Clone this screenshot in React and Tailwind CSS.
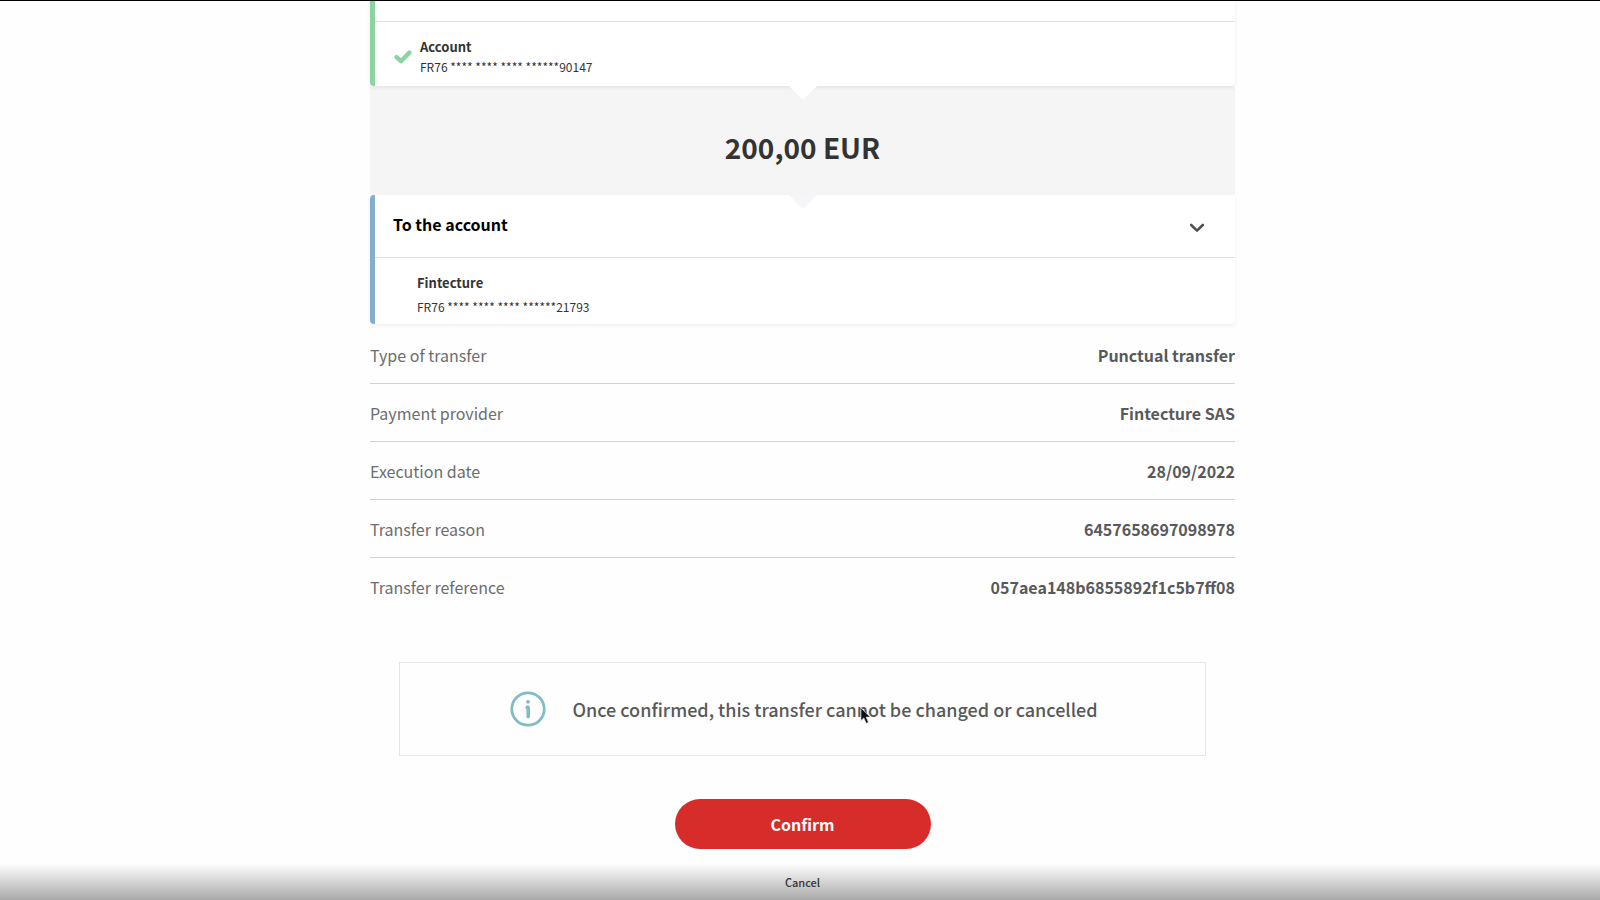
const details = [
  { label: "Type of transfer", value: "Punctual transfer" },
  { label: "Payment provider", value: "Fintecture SAS" },
  { label: "Execution date", value: "28/09/2022" },
  { label: "Transfer reason", value: "6457658697098978" },
  { label: "Transfer reference", value: "057aea148b6855892f1c5b7ff08" }
];

function Notch({ className }) {
  return (
    <svg viewBox="0 0 28 14" className={`absolute left-1/2 z-20 h-[14px] w-7 -translate-x-1/2 ${className}`} aria-hidden="true">
      <path d="M0 0H28L15.5 12.5Q14 14 12.5 12.5Z" fill="currentColor" />
    </svg>
  );
}

function CheckIcon() {
  return (
    <svg viewBox="0 0 18 16" className="h-4 w-[18px] text-[#8dd3a2]" fill="none" aria-hidden="true">
      <path d="M2.6 8.2L7 12.2L15.4 3.6" stroke="currentColor" strokeWidth="4.4" strokeLinecap="round" strokeLinejoin="round" />
    </svg>
  );
}

function InfoIcon() {
  return (
    <svg viewBox="0 0 36 36" className="h-9 w-9 shrink-0 text-[#80bcc3]" fill="none" aria-hidden="true">
      <circle cx="18" cy="18" r="16.2" stroke="currentColor" strokeWidth="2.8" />
      <circle cx="18" cy="10.8" r="1.9" fill="currentColor" />
      <path d="M17.2 16.4H18.2V25.6" stroke="currentColor" strokeWidth="3.6" strokeLinecap="round" strokeLinejoin="round" />
    </svg>
  );
}

function Pointer() {
  return (
    <svg viewBox="0 0 12 18" className="absolute top-3 left-72 h-[18px] w-3" aria-hidden="true">
      <path d="M1 1V13.5L3.9 10.9L6.2 16.3L8.4 15.3L6.1 10.1H10.2Z" fill="#111" stroke="#ddd" strokeWidth="0.6" />
    </svg>
  );
}

export default function App() {
  return (
    <main className="relative min-h-screen border-t border-black bg-[#fefefe] pl-[5px] font-['Noto_Sans_CJK_SC',sans-serif] text-[#58595a]">
      <div className="mx-auto flex w-full max-w-[865px] flex-col">
        <section className="relative z-10 rounded-b border-l-[5px] border-[#8dd3a2] bg-white shadow-[0_2px_4px_rgba(0,0,0,0.07)]">
          <div className="h-[21px] border-b border-[#dfe0e1]"></div>
          <div className="flex h-16 items-center gap-2 pt-1.5 pl-[19px]">
            <CheckIcon />
            <div className="text-[#333]">
              <h2 className="text-[13px] leading-5 font-bold">Account</h2>
              <p className="text-xs leading-5">FR76 **** **** **** ******90147</p>
            </div>
          </div>
        </section>

        <div className="relative flex h-[109px] items-center justify-center bg-[#f5f5f5] pt-3">
          <Notch className="top-0 text-white" />
          <p className="text-[28px] leading-9 font-bold text-[#333]">200,00 EUR</p>
          <Notch className="top-full text-[#f6f6f8]" />
        </div>

        <section className="rounded border-l-[5px] border-[#84aed0] bg-white shadow-[0_2px_4px_rgba(0,0,0,0.06)]">
          <div className="flex h-[63px] items-center justify-between border-b border-[#dfe0e1] pr-7 pl-[18px]">
            <h2 className="pb-1 text-base leading-6 font-bold text-black">To the account</h2>
            <button type="button" aria-label="Show account" className="mt-1 flex h-5 w-5 items-center justify-center">
              <svg viewBox="0 0 16 10" className="h-[10px] w-4" fill="none" aria-hidden="true">
                <path d="M2.2 2L8 7.6L13.8 2" stroke="#505050" strokeWidth="2.6" strokeLinecap="round" strokeLinejoin="round" />
              </svg>
            </button>
          </div>
          <div className="flex h-[66px] flex-col justify-center pt-2 pl-[42px] text-[#333]">
            <h3 className="text-[13px] leading-6 font-bold">Fintecture</h3>
            <p className="text-xs leading-6">FR76 **** **** **** ******21793</p>
          </div>
        </section>

        <table className="mt-px w-full text-base leading-6">
          <tbody className="divide-y divide-[#d2d2d2]">
            {details.map(row => (
              <tr key={row.label} className="h-[58px]">
                <th scope="row" className="pt-0.5 text-left font-normal text-[#6c6d6e]">{row.label}</th>
                <td className="pt-0.5 text-right font-bold">{row.value}</td>
              </tr>
            ))}
          </tbody>
        </table>

        <div className="mx-[29px] mt-[47px] flex h-[94px] items-center justify-center gap-[26px] border border-[#e6e6e6] pl-[3px]">
          <InfoIcon />
          <p className="relative text-lg leading-7 font-medium">
            Once confirmed, this transfer cannot be changed or cancelled
            <Pointer />
          </p>
        </div>

        <button type="button" className="mx-auto mt-[43px] h-[50px] w-64 rounded-full bg-[#d62d2b] text-base leading-6 font-bold text-white">
          Confirm
        </button>
        <button type="button" className="z-10 mx-auto mt-6 text-[11px] leading-[18px] font-medium text-[#333]">
          Cancel
        </button>
      </div>
      <div className="pointer-events-none absolute inset-x-0 bottom-0 h-9 bg-linear-to-b from-transparent to-[#a9a9a9]"></div>
    </main>
  );
}
